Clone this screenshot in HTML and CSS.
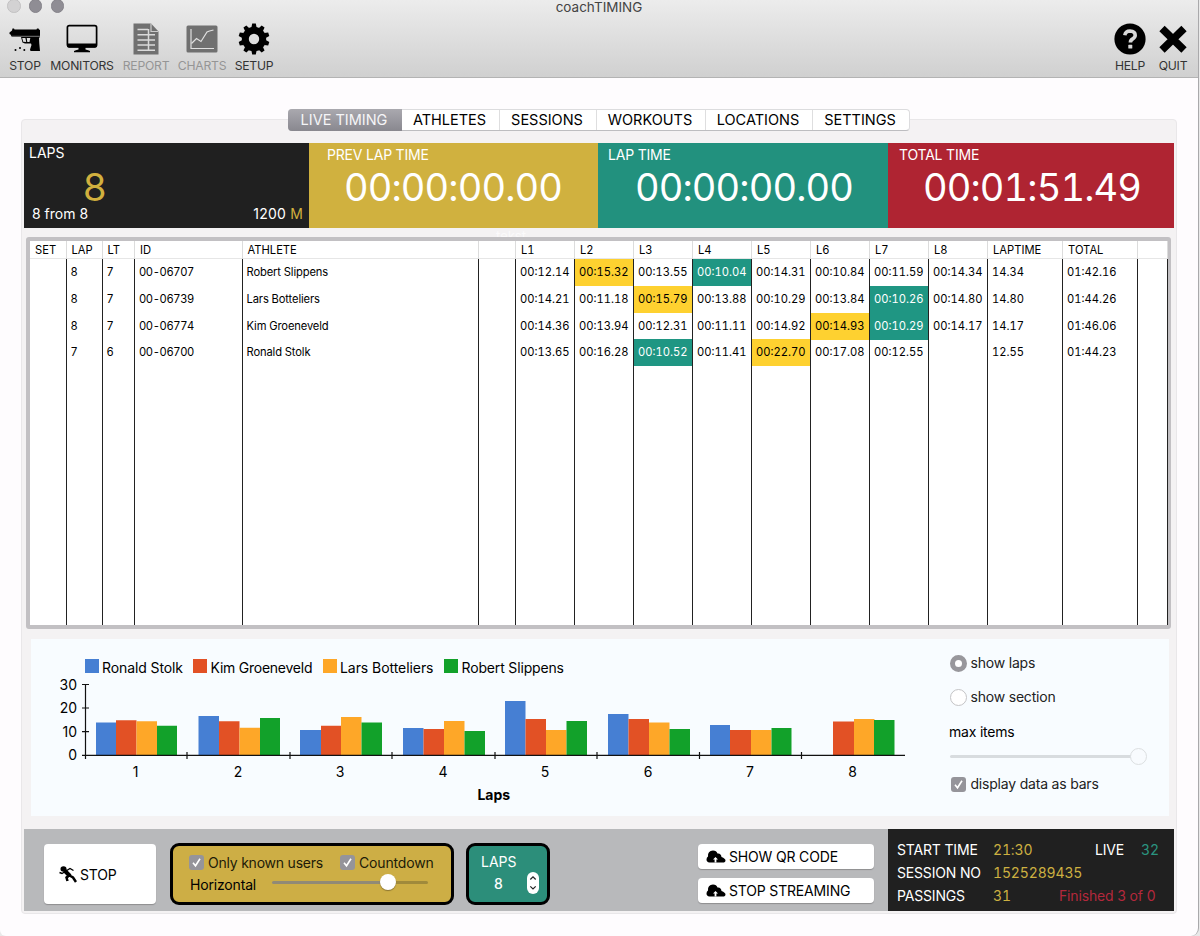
FILE: index.html
```html
<!DOCTYPE html>
<html lang="en">
<head>
<meta charset="utf-8">
<title>coachTIMING</title>
<link rel="stylesheet" href="styles.css">
</head>
<body>
<div class="window">
  <header class="titlebar">
    <div class="lights"><i class="light pale"></i><i class="light"></i><i class="light"></i></div>
    <h1 class="title">coachTIMING</h1>
    <nav class="toolbar">
      <div class="tool t-stop">
        <svg class="tool-icon" width="32" height="32" viewBox="0 0 32 32"><path d="M.5 9.500L3 7.500 3.500 5.500h1.500l.5 1H27.500l.5-1h1.500l.5 1 1 .5v7.500h-1l.3 6 .7 7.500h-9.500l-.5-1.500 1.500-4.500-.5-1.500h-6l-2.500-1-1.500-5.500H3L1.500 11.500.5 11zM13.200 15l1 3.700 3 .4-.8-4.100zM17.700 15l.6 4.100h2.200l.8-4.100z" fill="#000" fill-rule="evenodd"/><path d="M3 13.300h28" stroke="#aaa" stroke-width=".7"/><circle cx="6.500" cy="27" r="1"/><circle cx="11" cy="25" r="1"/><circle cx="15.300" cy="27" r="1"/></svg>
        <span>STOP</span>
      </div>
      <div class="tool t-monitors">
        <svg class="tool-icon" width="32" height="32" viewBox="0 0 32 32"><rect x="1.400" y="2.600" width="29.200" height="21" rx="1.800" fill="none" stroke="#000" stroke-width="1.700"/><path d="M1 20.500h30v2.500q0 1.800-2 1.800H3q-2 0-2-1.800zM12.500 24.500h7v2q3 .7 4.500 1.500v1.200H8v-1.200q1.500-.8 4.500-1.500z"/></svg>
        <span>MONITORS</span>
      </div>
      <div class="tool off t-report">
        <svg class="tool-icon" width="32" height="32" viewBox="0 0 32 32"><path d="M3.500.5H21l7.500 8V31.500h-25z" fill="#707070"/><path d="M21 .5v8h7.500" fill="none" stroke="#ccc" stroke-width="1.200"/><path d="M7.500 6.500H18M7.500 11.700h17.500M7.500 16.900h17.500M7.500 22.100h17.500M7.500 27.300h17.500M18.500 6v21.500" stroke="#dadada" stroke-width="1.500"/></svg>
        <span>REPORT</span>
      </div>
      <div class="tool off t-charts">
        <svg class="tool-icon" width="32" height="32" viewBox="0 0 32 32"><rect x=".5" y="2.500" width="31" height="27" rx="1.500" fill="#707070"/><path d="M5 6v19.500h23" fill="none" stroke="#e0e0e0" stroke-width="1.200"/><path d="M5.500 20.500l5-5 4.500 3 6-9.500 2.500-1 4-1" fill="none" stroke="#e0e0e0" stroke-width="1.200"/></svg>
        <span>CHARTS</span>
      </div>
      <div class="tool t-setup">
        <svg class="tool-icon" width="32" height="32" viewBox="0 0 32 32"><path d="M13.400 4.500L14.200.5h3.600l.8 4zM13.400 27.500l.8 4h3.600l.8-4z"/><path d="M13.400 4.500L14.200.5h3.600l.8 4zM13.400 27.500l.8 4h3.600l.8-4z" transform="rotate(36 16 16)"/><path d="M13.400 4.500L14.200.5h3.600l.8 4zM13.400 27.500l.8 4h3.600l.8-4z" transform="rotate(72 16 16)"/><path d="M13.400 4.500L14.200.5h3.600l.8 4zM13.400 27.500l.8 4h3.600l.8-4z" transform="rotate(108 16 16)"/><path d="M13.400 4.500L14.200.5h3.600l.8 4zM13.400 27.500l.8 4h3.600l.8-4z" transform="rotate(144 16 16)"/><circle cx="16" cy="16" r="8.700" fill="none" stroke="#000" stroke-width="7"/></svg>
        <span>SETUP</span>
      </div>
      <div class="tool t-help">
        <svg class="tool-icon" width="32" height="32" viewBox="0 0 32 32"><circle cx="16" cy="16" r="15.600"/><path d="M10.800 12.200q.7-4.200 5.200-4.200 5.200.2 5.200 4.300 0 2-2.500 3.600-2.300 1.400-2.300 3.600" fill="none" stroke="#d8d8d8" stroke-width="3.600"/><rect x="14.300" y="21.800" width="4" height="3.800" rx=".6" fill="#d8d8d8"/></svg>
        <span>HELP</span>
      </div>
      <div class="tool t-quit">
        <svg class="tool-icon" width="32" height="32" viewBox="0 0 32 32"><path d="M5 5.500L27 27M27 5.500L5 27" stroke="#000" stroke-width="7.600"/></svg>
        <span>QUIT</span>
      </div>
    </nav>
  </header>

  <nav class="tabs">
    <span class="tab active tab-live">LIVE TIMING</span><span class="tab tab-ath">ATHLETES</span><span class="tab tab-ses">SESSIONS</span><span class="tab tab-wor">WORKOUTS</span><span class="tab tab-loc">LOCATIONS</span><span class="tab tab-set">SETTINGS</span>
  </nav>

  <main class="panel">
    <section class="tiles">
      <div class="tile laps">
        <div class="tile-label">LAPS</div>
        <div class="lap-count">8</div>
        <div class="lap-foot"><span>8 from 8</span><span class="dist">1200 <b>M</b></span></div>
      </div>
      <div class="tile prev"><div class="tile-label">PREV LAP TIME</div><div class="clock">00:00:00.00</div></div>
      <div class="tile lap"><div class="tile-label">LAP TIME</div><div class="clock">00:00:00.00</div></div>
      <div class="tile total"><div class="tile-label">TOTAL TIME</div><div class="clock">00:01:51.49</div></div>
    </section>
    <div class="hint">tekst</div>

    <section class="grid">
      <div class="row head"><span>SET</span><span>LAP</span><span>LT</span><span>ID</span><span>ATHLETE</span><span></span><span>L1</span><span>L2</span><span>L3</span><span>L4</span><span>L5</span><span>L6</span><span>L7</span><span>L8</span><span>LAPTIME</span><span>TOTAL</span><span></span></div>
      <div class="row"><span></span><span>8</span><span>7</span><span class="id">00-06707</span><span class="name">Robert Slippens</span><span></span><span>00:12.14</span><span class="slow">00:15.32</span><span>00:13.55</span><span class="fast">00:10.04</span><span>00:14.31</span><span>00:10.84</span><span>00:11.59</span><span>00:14.34</span><span>14.34</span><span>01:42.16</span><span></span></div>
      <div class="row"><span></span><span>8</span><span>7</span><span class="id">00-06739</span><span class="name">Lars Botteliers</span><span></span><span>00:14.21</span><span>00:11.18</span><span class="slow">00:15.79</span><span>00:13.88</span><span>00:10.29</span><span>00:13.84</span><span class="fast">00:10.26</span><span>00:14.80</span><span>14.80</span><span>01:44.26</span><span></span></div>
      <div class="row"><span></span><span>8</span><span>7</span><span class="id">00-06774</span><span class="name">Kim Groeneveld</span><span></span><span>00:14.36</span><span>00:13.94</span><span>00:12.31</span><span>00:11.11</span><span>00:14.92</span><span class="slow">00:14.93</span><span class="fast">00:10.29</span><span>00:14.17</span><span>14.17</span><span>01:46.06</span><span></span></div>
      <div class="row"><span></span><span>7</span><span>6</span><span class="id">00-06700</span><span class="name">Ronald Stolk</span><span></span><span>00:13.65</span><span>00:16.28</span><span class="fast">00:10.52</span><span>00:11.41</span><span class="slow">00:22.70</span><span>00:17.08</span><span>00:12.55</span><span></span><span>12.55</span><span>01:44.23</span><span></span></div>
      <div class="row rest"><span></span><span></span><span></span><span></span><span></span><span></span><span></span><span></span><span></span><span></span><span></span><span></span><span></span><span></span><span></span><span></span><span></span></div>
    </section>

    <section class="chart-panel">
      <svg class="chart" width="900" height="177" viewBox="31 639 900 177">
        <g class="blue"><rect x="85" y="659" width="14" height="14"/><path d="M96 755v-32.500h20.500V755zM198.500 755v-39H219v39zM300 755v-25h21v25zM403 755v-27h20.500v27zM505 755v-54h20.500v54zM608 755v-41h20.500v41zM710 755v-30h20v30z"/></g>
        <g class="red"><rect x="193" y="659" width="14" height="14"/><path d="M116 755v-34.700h20.500V755zM219 755v-33.700h20.500V755zM321 755v-29.300h20.500V755zM423.500 755v-26h20.500v26zM525.500 755v-36H546v36zM628.500 755v-36H649v36zM730 755v-25h21v25zM833 755v-33.500h21V755z"/></g>
        <g class="orange"><rect x="323" y="659" width="14" height="14"/><path d="M136.500 755v-33.700H157V755zM239.500 755v-27.300H260V755zM341 755v-38h20.500v38zM444 755v-34h20.500v34zM546 755v-25h20.500v25zM649 755v-32.500h20.500V755zM751 755v-25h20.500v25zM854 755v-36h20.500v36z"/></g>
        <g class="green"><rect x="444" y="659" width="14" height="14"/><path d="M157 755v-29.300h20V755zM260 755v-37h20v37zM361.500 755v-32.500H382V755zM464.500 755v-24H485v24zM566.500 755v-34H587v34zM669.500 755v-26H690v26zM771.500 755v-27H791.500v27zM874 755v-35h20.500v35z"/></g>
        <path class="axis" d="M85.500 684v75M82 684.500h7M82 708h7M82 731.700h7M82 755.400H905M187 752v7M290 752v7M392 752v7M495 752v7M597 752v7M699.500 752v7M801.500 752v7"/>
        <g class="legend">
          <text x="102" y="673.300" textLength="81">Ronald Stolk</text>
          <text x="210.500" y="673.300" textLength="102">Kim Groeneveld</text>
          <text x="340" y="673.300" textLength="93.500">Lars Botteliers</text>
          <text x="461.500" y="673.300" textLength="102.500">Robert Slippens</text>
        </g>
        <g class="ylab"><text x="77" y="689.500">30</text><text x="77" y="713">20</text><text x="77" y="736.500">10</text><text x="77" y="760.200">0</text></g>
        <g class="xlab"><text x="135.500" y="777.300">1</text><text x="238" y="777.300">2</text><text x="340" y="777.300">3</text><text x="443" y="777.300">4</text><text x="545" y="777.300">5</text><text x="648" y="777.300">6</text><text x="750" y="777.300">7</text><text x="852.500" y="777.300">8</text></g>
        <text class="xtitle" x="477.500" y="800.300" textLength="32.500">Laps</text>
      </svg>
      <div class="options">
        <div class="opt"><i class="radio on"></i><span>show laps</span></div>
        <div class="opt second"><i class="radio"></i><span>show section</span></div>
        <div class="opt-title">max items</div>
        <div class="slider wide"><i class="knob"></i></div>
        <div class="opt bars"><i class="check"><svg width="15" height="15" viewBox="0 0 15 15"><path d="M4 7.800l2.500 3 4.500-7"/></svg></i><span>display data as bars</span></div>
      </div>
    </section>

    <section class="footer">
      <div class="button stop">
        <svg width="18" height="17" viewBox="0 0 18 17"><ellipse cx="4.500" cy="3" rx="3" ry="2.700"/><path d="M5.500 4.500l5.500 5.500" stroke="#000" stroke-width="4"/><path d="M10 9.500L7.500 11.500l1 3.500M10.500 9.500l3.500 2 3 4.500" fill="none" stroke="#000" stroke-width="2.500"/><path d="M7 5l4-2.500 3.500 2M5.500 6L3 7.500.5 6.500M9 7l2 2" fill="none" stroke="#000" stroke-width="1.400"/></svg>
        <span>STOP</span>
      </div>
      <div class="box users">
        <div class="box-line"><i class="check"><svg width="15" height="15" viewBox="0 0 15 15"><path d="M4 7.800l2.500 3 4.500-7"/></svg></i><span class="known">Only known users</span><i class="check"><svg width="15" height="15" viewBox="0 0 15 15"><path d="M4 7.800l2.500 3 4.500-7"/></svg></i><span class="countdown">Countdown</span></div>
        <div class="box-line low"><span class="horiz">Horizontal</span><div class="slider short"><i class="knob"></i></div></div>
      </div>
      <div class="box lapbox">
        <span class="lapbox-label">LAPS</span>
        <div class="lapbox-row"><b>8</b><i class="stepper"><svg width="12" height="22" viewBox="0 0 12 22"><path d="M3.300 7.500L6 4.800l2.700 2.700M3.300 14.300L6 17l2.700-2.700"/></svg></i></div>
      </div>
      <div class="stream">
        <div class="button cloud"><svg width="20" height="13" viewBox="0 0 20 13"><path d="M3.500 12.500Q.5 12 .5 9.500q0-2 1.500-3-.5-5.500 5-6 3.500 0 4.500 3 3.500-.5 4 3.500 4 1.500 4 3.500 0 1.500-1.500 2z"/><path d="M9.500 7l2.500 2.600h-1.600v2.900H8.600V9.600H7z" fill="#fff"/></svg><span>SHOW QR CODE</span></div>
        <div class="button cloud"><svg width="20" height="13" viewBox="0 0 20 13"><path d="M3.500 12.500Q.5 12 .5 9.500q0-2 1.500-3-.5-5.500 5-6 3.500 0 4.500 3 3.500-.5 4 3.500 4 1.500 4 3.500 0 1.500-1.500 2z"/><path d="M9.500 7l2.500 2.600h-1.600v2.900H8.600V9.600H7z" fill="#fff"/></svg><span>STOP STREAMING</span></div>
      </div>
      <div class="status">
        <span>START TIME</span><em>21:30</em><span class="live">LIVE</span><em class="teal">32</em>
        <span>SESSION NO</span><em class="span3">1525289435</em>
        <span>PASSINGS</span><em>31</em><em class="finished">Finished 3 of 0</em>
      </div>
    </section>
  </main>
</div>
</body>
</html>
```
FILE: styles.css
```css
* { box-sizing: border-box; }
body {
  margin: 0;
  height: 936px;
  overflow: hidden;
  background: #e9e9e9;
  font-family: Inter, "Open Sans", sans-serif;
  font-size: 14px;
  color: #111;
}
i, em, b { font-style: normal; font-weight: inherit; }
span { white-space: nowrap; }

.window {
  width: 1199px;
  height: 936px;
  background: #fefcfe;
  border-right: 1px solid #a9a9ab;
  border-radius: 0 0 8px 6px;
}

/* title bar and toolbar */
.titlebar {
  position: relative;
  height: 78px;
  background: linear-gradient(#ececec, #d0d0d0);
  border-bottom: 1px solid #b3b3b3;
}
.lights { position: absolute; left: 7px; top: -1px; display: flex; gap: 8.300px; }
.light { width: 13.500px; height: 13.500px; border-radius: 50%; background: #8f8d94; border: 1px solid #85838a; }
.light.pale { background: #d3d2d3; border-color: #c2c1c2; }
.title { margin: 0; text-align: center; font-size: 13.500px; line-height: 14px; font-weight: 400; color: #444; }
.toolbar { display: flex; gap: 10px; padding: 9px 10px 0 9px; }
.tool { display: flex; flex-direction: column; align-items: center; gap: 3px; font-size: 12.200px; line-height: 16px; letter-spacing: -.25px; color: #333; }
.tool-icon { flex: none; }
.tool.off { color: #959595; }
.t-stop { width: 32px; }
.t-monitors { width: 62px; }
.t-report { width: 46px; }
.t-charts { width: 46px; }
.t-setup { width: 38px; }
.t-help { width: 32px; margin-left: auto; }
.t-quit { width: 32px; margin: 0 -1px 0 1px; }

/* tabs */
.tabs {
  position: relative;
  z-index: 1;
  display: flex;
  width: 622px;
  height: 22px;
  margin: 31px 0 -12px 288px;
  background: #fff;
  border: 1px solid #dcdcde;
  border-bottom-color: #bdbdc0;
  border-radius: 4px;
}
.tab { display: flex; align-items: center; justify-content: center; padding: 0 2px 2px 0; border-left: 1px solid #dededf; font-size: 14.500px; color: #000; }
.tab.active { margin: -1px 0 -1px -1px; border: 0; border-radius: 4px 0 0 4px; background: linear-gradient(#aaa9af, #89888f); color: #f5f5f7; }
.tab-live { width: 114px; }
.tab-ath { width: 97px; border: 0; }
.tab-ses { width: 97px; }
.tab-wor { width: 109px; }
.tab-loc { width: 107px; }
.tab-set { flex: 1; }

.panel {
  position: relative;
  width: 1156px;
  height: 795px;
  margin-left: 21px;
  padding: 23px 2px 0;
  background: #f4f2f3;
  border: 1px solid #e9e7e9;
  border-radius: 4px;
}

/* timing tiles */
.tiles { display: grid; grid-template-columns: 285px 289px 290px 286px; height: 85px; }
.tile { color: #fff; }
.tile-label { font-size: 14px; line-height: 19px; letter-spacing: -.2px; }
.laps { display: flex; flex-direction: column; padding-left: 5px; background: #202020; }
.laps .tile-label { letter-spacing: 0; }
.lap-count { height: 43px; padding-left: 54px; font-size: 38px; line-height: 50px; color: #d1b03e; }
.lap-foot { display: flex; justify-content: space-between; padding: 0 6px 0 3px; line-height: 18px; }
.dist { letter-spacing: .2px; }
.dist b { color: #d1b03e; }
.prev { background: #d0b13f; }
.lap { background: #22917e; }
.total { background: #af2432; }
.prev, .lap, .total { padding-top: 2px; }
.prev .tile-label { padding-left: 18px; }
.lap .tile-label { padding-left: 10px; }
.total .tile-label { padding-left: 11px; }
.clock { font-size: 38px; line-height: 46px; letter-spacing: -.88px; font-variant-numeric: tabular-nums; }
.prev .clock, .lap .clock { padding-left: 35px; }
.lap .clock { padding-left: 37px; }
.total .clock { padding-left: 35px; }
.hint { position: absolute; left: 474px; top: 109px; font-size: 13px; line-height: 14px; color: #fbfafb; }

/* results grid */
.grid {
  position: relative;
  display: flex;
  flex-direction: column;
  width: 1145px;
  height: 392px;
  margin: 9px 0 0 2px;
  border: 4px solid #c2c0c3;
  border-right-width: 3px;
  border-radius: 3px;
  background: #fff;
  overflow: hidden;
}
.row {
  display: grid;
  grid-template-columns: 36.500px 36px 32.500px 107.500px 236px 37.500px 59px 59px 59px 59px 59px 59px 59px 59px 75px 75px 30px;
  height: 26.800px;
  font-size: 11.200px;
  font-variant-numeric: tabular-nums;
  color: #000;
}
.row span { border-right: 1px solid #222; padding-left: 4px; line-height: 27px; }
.row .id { letter-spacing: -.4px; }
.row .name { letter-spacing: -.13px; }
.row.head { height: 18px; border-bottom: 1px solid #e6e6e6; }
.row.head span { border-right-color: #dcdcdc; padding-left: 5px; line-height: 18px; }
.row.rest { flex: 1; height: auto; }
.row .slow { background: #fed130; }
.row .fast { background: #1f9683; color: #fff; }

/* chart */
.chart-panel { display: flex; width: 1138px; height: 177px; margin: 10px 0 0 7px; background: #f8fcff; }
.blue { fill: #467fd3; }
.red { fill: #e25125; }
.orange { fill: #fea728; }
.green { fill: #12a12a; }
.axis { fill: none; stroke: #111; stroke-width: 1.200; }
.chart text { font-size: 14px; fill: #000; }
.ylab text { text-anchor: end; }
.xlab text { text-anchor: middle; }
.chart .xtitle { font-weight: 700; }
.options { padding: 15px 0 0 19px; letter-spacing: -.2px; }
.opt { display: flex; align-items: center; gap: 3.500px; height: 18px; color: #222; }
.opt span { line-height: 17px; padding-bottom: 1px; }
.opt.second { margin-top: 16px; }
.radio { width: 17px; height: 17px; border: 1px solid #c4c4c6; border-radius: 50%; background: #fff; }
.radio.on { border: 5.500px solid #98979c; }
.opt-title { margin: 16px 0 0 -1px; line-height: 20px; color: #000; }
.slider { position: relative; height: 3px; border-radius: 2px; }
.slider.wide { width: 188px; margin: 13px 0 0 0; background: #d8dcdf; }
.knob { position: absolute; border-radius: 50%; background: #fff; }
.wide .knob { right: -9px; top: -7px; width: 17px; height: 17px; background: #f8fbfe; border: 1px solid #dcdfe1; }
.opt.bars { margin-top: 17px; padding-left: 1px; gap: 4.500px; }
.check { flex: none; width: 15px; height: 15px; border-radius: 3px; background: #95949a; }
.check svg { display: block; }
.check path { fill: none; stroke: #fff; stroke-width: 1.600; }

/* control strip */
.footer { display: flex; width: 1150px; height: 82px; margin-top: 13px; background: #b8b9bb; letter-spacing: -.17px; }
.button { display: flex; align-items: center; background: #fff; border-radius: 4px; box-shadow: 0 1px 1px #8e8e90; color: #000; }
.button svg { flex: none; }
.stop { width: 112px; height: 60px; margin: 15px 0 0 20px; padding-left: 15px; gap: 3px; }
.box { margin-top: 14px; border: 3px solid #000; border-radius: 9px; height: 62px; }
.users { width: 284px; margin-left: 14px; padding: 8px 0 0 16px; background: #cdae45; }
.box-line { display: flex; align-items: center; height: 17px; color: #211b08; }
.box-line .check { margin-right: 4px; }
.known { width: 132px; letter-spacing: -.22px; }
.box-line.low { height: 27px; color: #000; }
.horiz { width: 82px; padding: 0 0 1px 1px; margin-right: 1px; }
.slider.short { width: 156px; margin-top: -5px; background: linear-gradient(90deg, #918a76 0 116px, #a08a3b 116px); }
.short .knob { left: 108px; top: -7px; width: 16px; height: 16px; box-shadow: 0 1px 1px #8a7430; }
.lapbox { width: 84px; margin-left: 12px; padding: 6px 0 0 12px; background: #2c8e7a; color: #fff; letter-spacing: 0; }
.lapbox-label { display: block; line-height: 19px; }
.lapbox-row { display: flex; align-items: center; justify-content: space-between; padding: 1px 8px 0 13px; }
.lapbox-row b { font-weight: 500; }
.stepper { width: 12px; height: 22px; border-radius: 6px; background: #fff; }
.stepper svg { display: block; }
.stepper path { fill: none; stroke: #222; stroke-width: 1.200; }
.stream { display: flex; flex-direction: column; gap: 9px; width: 176px; margin: 15px 14px 0 auto; }
.cloud { height: 25px; padding-left: 8px; gap: 3px; }
.status {
  display: grid;
  grid-template-columns: 96px 102px 46px 30px;
  grid-template-rows: repeat(3, 23.200px);
  width: 286px;
  padding: 9px 0 0 9px;
  background: #202020;
  color: #fff;
  line-height: 24px;
}
.status em { color: #cdb041; font-variant-numeric: tabular-nums; letter-spacing: -.15px; }
.status .teal { color: #2b9580; }
.status .span3 { grid-column: span 3; }
.status .finished { grid-column: 3 / span 2; margin-left: -36px; color: #b3283c; white-space: nowrap; font-variant-numeric: normal; }
```
